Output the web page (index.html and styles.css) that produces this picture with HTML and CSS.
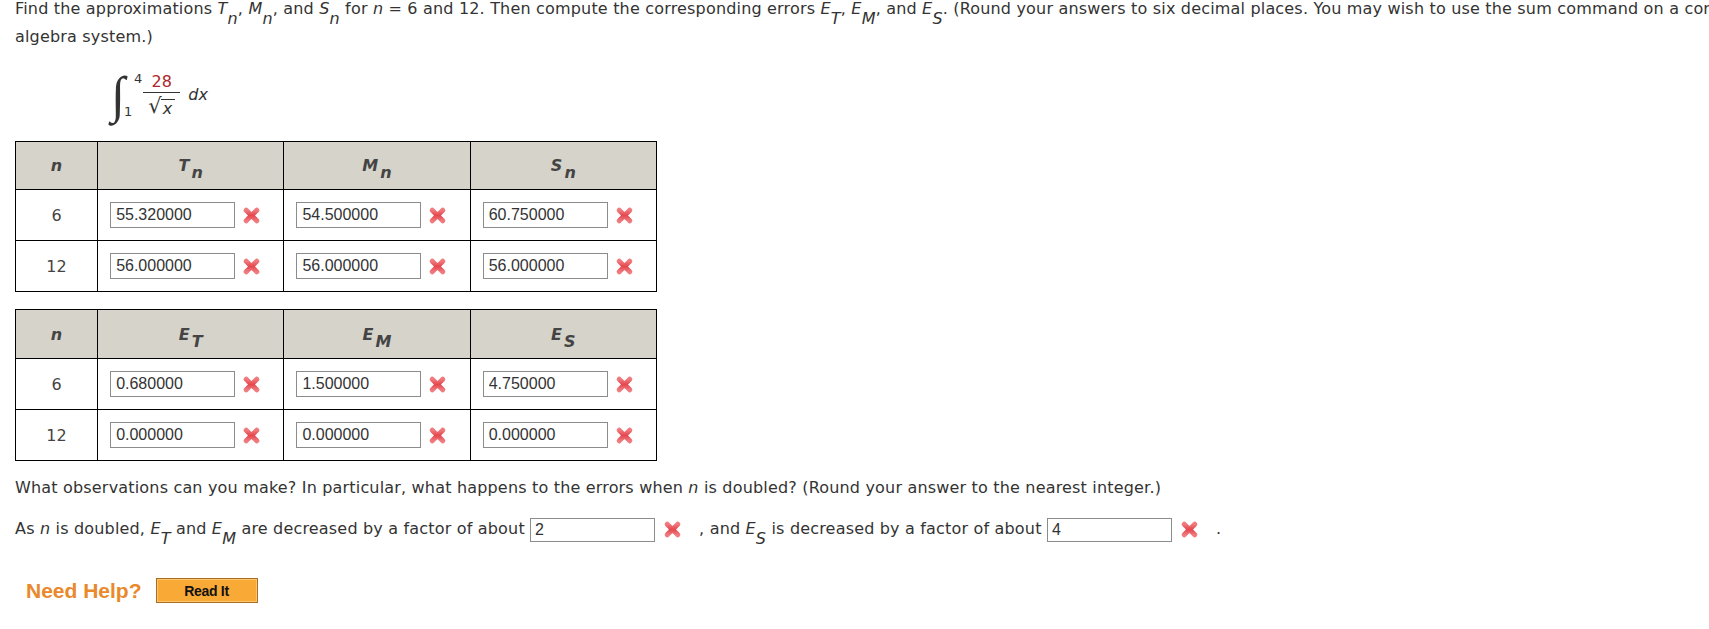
FILE: index.html
```html
<!DOCTYPE html>
<html>
<head>
<meta charset="utf-8">
<link rel="stylesheet" href="styles.css">
</head>
<body>
<svg class="defs" width="0" height="0" aria-hidden="true">
  <defs>
    <linearGradient id="xg" x1="0" y1="0" x2="0" y2="1">
      <stop offset="0" stop-color="#f07a7e"/>
      <stop offset="0.5" stop-color="#e4474d"/>
      <stop offset="1" stop-color="#f07a7e"/>
    </linearGradient>
    <symbol id="wrong" viewBox="0 0 18 18">
      <path d="M4 4 L14 14 M14 4 L4 14" stroke="url(#xg)" stroke-width="4.8" stroke-linecap="round" fill="none"/>
    </symbol>
  </defs>
</svg>

<p class="prompt">Find the approximations <span class="v">T<sub>n</sub></span>, <span class="v">M<sub>n</sub></span>, and <span class="v">S<sub>n</sub></span> for <span class="v">n</span> = 6 and 12. Then compute the corresponding errors <span class="v">E<sub>T</sub></span>, <span class="v">E<sub>M</sub></span>, and <span class="v">E<sub>S</sub></span>. (Round your answers to six decimal places. You may wish to use the sum command on a computer<br>algebra system.)</p>

<div class="integral">
  <span class="int-sign">∫</span>
  <span class="limits"><span class="upper">4</span><span class="lower">1</span></span>
  <span class="frac">
    <span class="num">28</span>
    <span class="den"><span class="rad">√</span><span class="radicand v">x</span></span>
  </span>
  <span class="dx v">dx</span>
</div>

<table class="grid grid-first">
  <colgroup><col class="c-n"><col class="c-a"><col class="c-a"><col class="c-a"></colgroup>
  <tr class="head"><th>n</th><th>T<sub>n</sub></th><th>M<sub>n</sub></th><th>S<sub>n</sub></th></tr>
  <tr class="row">
    <td class="n">6</td>
    <td class="ans"><input class="answer" value="55.320000"><svg class="wrong"><use href="#wrong"/></svg></td>
    <td class="ans"><input class="answer" value="54.500000"><svg class="wrong"><use href="#wrong"/></svg></td>
    <td class="ans"><input class="answer" value="60.750000"><svg class="wrong"><use href="#wrong"/></svg></td>
  </tr>
  <tr class="row">
    <td class="n">12</td>
    <td class="ans"><input class="answer" value="56.000000"><svg class="wrong"><use href="#wrong"/></svg></td>
    <td class="ans"><input class="answer" value="56.000000"><svg class="wrong"><use href="#wrong"/></svg></td>
    <td class="ans"><input class="answer" value="56.000000"><svg class="wrong"><use href="#wrong"/></svg></td>
  </tr>
</table>

<table class="grid grid-second">
  <colgroup><col class="c-n"><col class="c-a"><col class="c-a"><col class="c-a"></colgroup>
  <tr class="head head2"><th>n</th><th>E<sub>T</sub></th><th>E<sub>M</sub></th><th>E<sub>S</sub></th></tr>
  <tr class="row">
    <td class="n">6</td>
    <td class="ans"><input class="answer" value="0.680000"><svg class="wrong"><use href="#wrong"/></svg></td>
    <td class="ans"><input class="answer" value="1.500000"><svg class="wrong"><use href="#wrong"/></svg></td>
    <td class="ans"><input class="answer" value="4.750000"><svg class="wrong"><use href="#wrong"/></svg></td>
  </tr>
  <tr class="row">
    <td class="n">12</td>
    <td class="ans"><input class="answer" value="0.000000"><svg class="wrong"><use href="#wrong"/></svg></td>
    <td class="ans"><input class="answer" value="0.000000"><svg class="wrong"><use href="#wrong"/></svg></td>
    <td class="ans"><input class="answer" value="0.000000"><svg class="wrong"><use href="#wrong"/></svg></td>
  </tr>
</table>

<p class="text obs">What observations can you make? In particular, what happens to the errors when <span class="v">n</span> is doubled? (Round your answer to the nearest integer.)</p>
<p class="text result">As <span class="v">n</span> is doubled, <span class="v">E<sub>T</sub></span> and <span class="v">E<sub>M</sub></span> are decreased by a factor of about <input class="answer small" value="2"><svg class="wrong inline"><use href="#wrong"/></svg>, and <span class="v">E<sub>S</sub></span> is decreased by a factor of about <input class="answer small" value="4"><svg class="wrong inline"><use href="#wrong"/></svg>.</p>

<div class="help">
  <span class="need">Need Help?</span>
  <button class="read">Read It</button>
</div>
</body>
</html>
```

FILE: styles.css
```css
html {
  overflow: hidden;
}

body {
  margin: 0;
  padding: 0 0 0 15px;
  font-family: "DejaVu Sans", Verdana, sans-serif;
  font-size: 16px;
  letter-spacing: 0.18px;
  color: #333;
  background: #fff;
}

.defs {
  position: absolute;
  width: 0;
  height: 0;
}

.v {
  font-style: italic;
}

sub {
  font-size: 1em;
  vertical-align: -0.6em;
  line-height: 0;
}

.prompt {
  margin: -5px 0 0;
  line-height: 28px;
  white-space: nowrap;
}

/* integral */
.integral {
  display: flex;
  align-items: center;
  margin: 19px 0 0 96px;
  height: 50px;
  letter-spacing: 0;
}

.int-sign {
  flex: none;
  width: 17px;
  font-family: "Liberation Serif", "DejaVu Serif", serif;
  font-size: 51px;
  line-height: 50px;
  color: #333;
}

.limits {
  flex: none;
  display: flex;
  flex-direction: column;
  justify-content: space-between;
  height: 46px;
  margin-left: -4px;
  font-size: 13px;
  line-height: 13px;
}

.upper {
  margin-left: 10px;
}

.lower {
  margin-left: 0;
}

.frac {
  flex: none;
  display: flex;
  flex-direction: column;
  align-items: center;
  margin-left: 1px;
  width: 37px;
}

.num {
  color: #b0262b;
  line-height: 18px;
  border-bottom: 1px solid #333;
  width: 100%;
  text-align: center;
  padding-bottom: 1px;
}

.den {
  display: flex;
  align-items: flex-end;
  line-height: 20px;
  margin-top: 2px;
}

.rad {
  font-size: 21px;
  line-height: 22px;
}

.radicand {
  border-top: 1px solid #333;
  padding: 0 3px 0 2px;
  line-height: 17px;
  margin-left: -1px;
}

.dx {
  margin-left: 8px;
  margin-top: -2px;
}

/* tables */
.grid {
  border-collapse: collapse;
  table-layout: fixed;
  width: 642px;
}

.grid-first {
  margin-top: 21px;
}

.grid-second {
  margin-top: 17px;
}

.c-n {
  width: 82px;
}

.c-a {
  width: 186px;
}

.grid th,
.grid td {
  border: 1px solid #000;
  padding: 0;
}

.grid th {
  background: #d6d3ca;
  color: #444;
  font-style: italic;
  font-weight: bold;
  text-align: center;
}

.grid th sub {
  vertical-align: -0.45em;
  margin-left: 2px;
}

.head {
  height: 48px;
}

.head2 {
  height: 49px;
}

.row {
  height: 51px;
}

.grid td.n {
  text-align: center;
  color: #444;
}

.grid td.ans {
  padding-left: 12px;
  white-space: nowrap;
}

.answer {
  box-sizing: border-box;
  width: 125px;
  height: 26px;
  margin: 0;
  padding: 0 5px;
  border: 1px solid #8c8c8c;
  font-family: "Liberation Sans", Arial, sans-serif;
  font-size: 16px;
  color: #333;
  background: #fff;
  vertical-align: middle;
}

.answer.small {
  height: 24px;
  padding: 0 4px;
  margin-left: 0;
}

.wrong {
  width: 19px;
  height: 19px;
  margin-left: 7px;
  vertical-align: middle;
}

.wrong.inline {
  margin: 0 17px 0 8px;
}

/* text paragraphs */
.text {
  line-height: 28px;
  margin: 0;
  white-space: nowrap;
}

.obs {
  margin-top: 13px;
}

.result {
  margin-top: 13px;
}

/* help */
.help {
  display: flex;
  align-items: center;
  margin-top: 35px;
  padding-left: 11px;
  gap: 14px;
  letter-spacing: 0;
}

.need {
  font-family: "Liberation Sans", Arial, sans-serif;
  font-weight: bold;
  font-size: 21px;
  color: #e9892c;
}

.read {
  width: 102px;
  height: 25px;
  padding: 0;
  border: 1px solid #a86c22;
  box-shadow: inset 0 0 0 1px #fcc66e;
  background: #f8a936;
  font-family: "Liberation Sans", Arial, sans-serif;
  font-weight: bold;
  font-size: 14px;
  color: #111;
  letter-spacing: -0.3px;
}
```
